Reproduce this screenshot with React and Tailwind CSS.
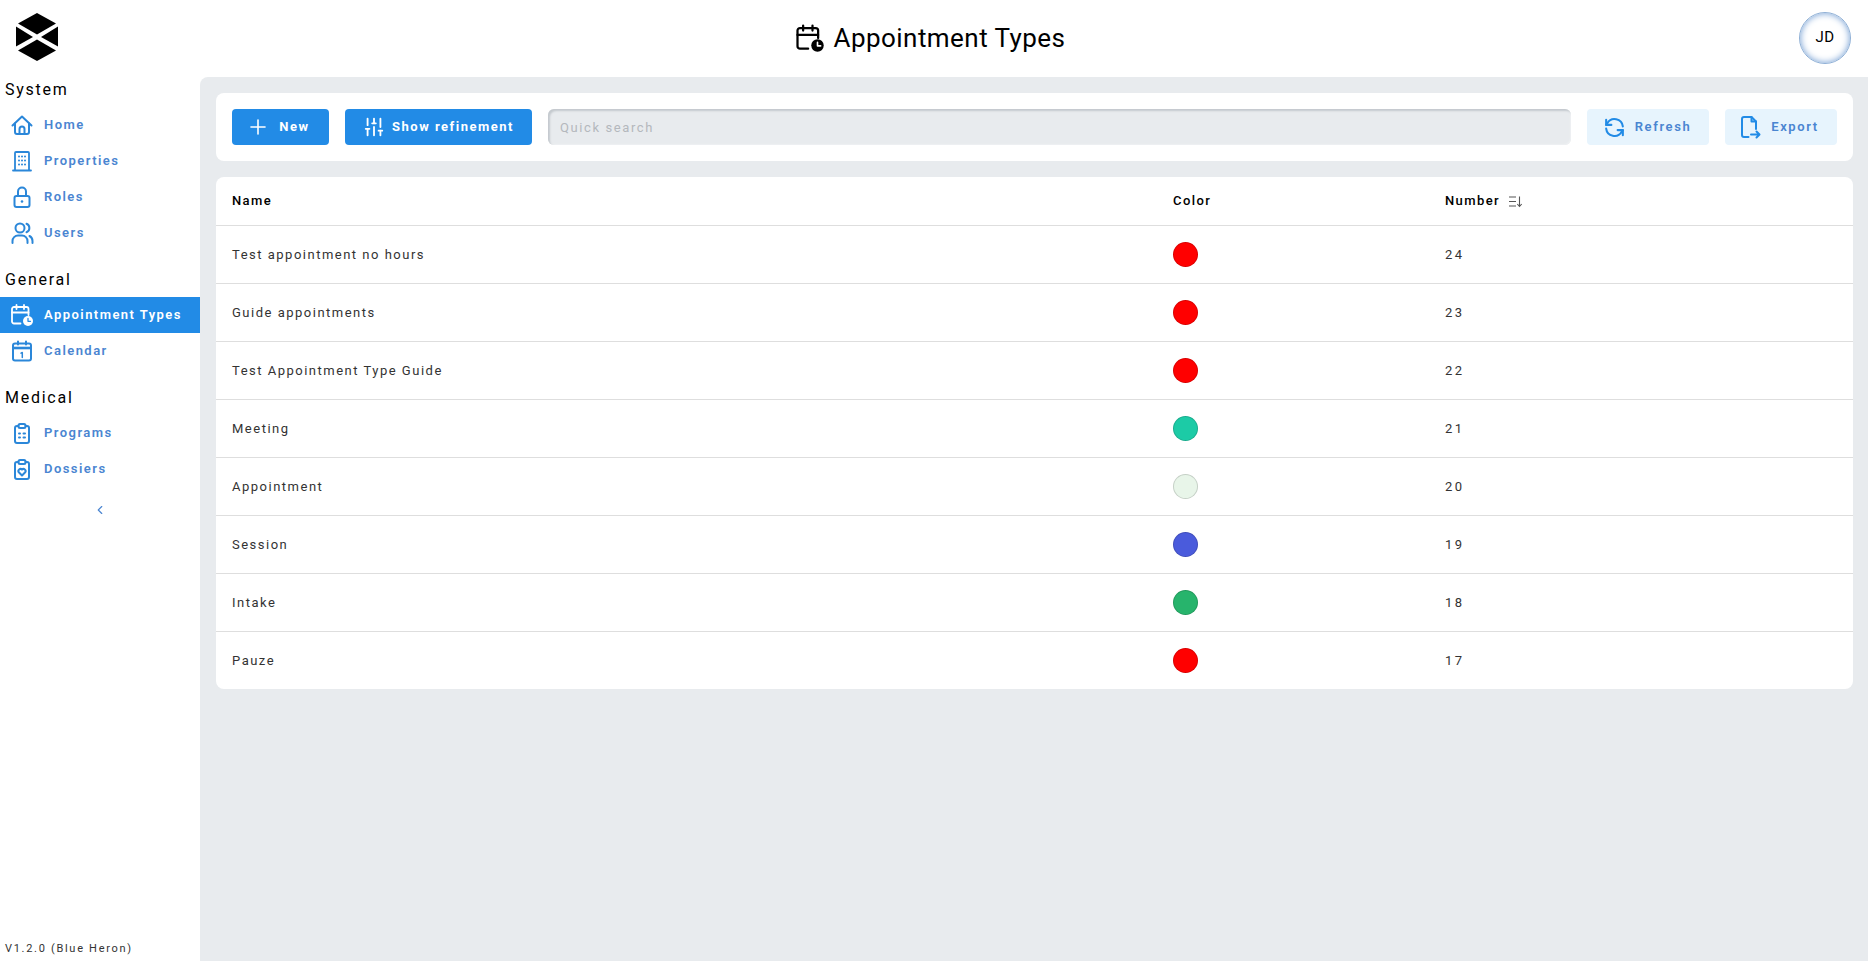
import { Plus, SlidersVertical, ChevronLeft } from 'lucide-react'

const rows = [
  { name: 'Test appointment no hours', color: '#ff0000', number: 24 },
  { name: 'Guide appointments', color: '#ff0000', number: 23 },
  { name: 'Test Appointment Type Guide', color: '#ff0000', number: 22 },
  { name: 'Meeting', color: '#1ccba6', number: 21 },
  { name: 'Appointment', color: '#e8f5e9', number: 20 },
  { name: 'Session', color: '#4a5bdc', number: 19 },
  { name: 'Intake', color: '#27b46c', number: 18 },
  { name: 'Pauze', color: '#ff0000', number: 17 },
]

function Logo() {
  return (
    <svg width="42" height="48" viewBox="0 0 42 48" fill="#000">
      <polygon points="21,0 40,10.5 21,21.5 2,10.5" />
      <polygon points="21,26.5 40,37.5 21,48 2,37.5" />
      <polygon points="0,13.5 17,24 0,33.5" />
      <polygon points="42,13.5 25,24 42,33.5" />
    </svg>
  )
}

// all line icons share the same 24 box and stroke
function Icon({ size = 24, width = 2, children }) {
  return (
    <svg width={size} height={size} viewBox="0 0 24 24" fill="none" stroke="currentColor" strokeWidth={width} strokeLinecap="round" strokeLinejoin="round">
      {children}
    </svg>
  )
}

const HomeIcon = () => (
  <Icon>
    <path d="M2.5 12.5L12 3.5l9.5 9" />
    <path d="M5 10.5V19a2 2 0 0 0 2 2h10a2 2 0 0 0 2-2v-8.500" />
    <path d="M9.500 21v-5a2.500 2.500 0 0 1 5 0v5" />
  </Icon>
)

const BuildingIcon = () => (
  <Icon width={1.8}>
    <path d="M5 21.500V4a1 1 0 0 1 1-1h12a1 1 0 0 1 1 1v17.500M3 21.500h18" />
    <path d="M9 7.500h.01M12 7.500h.01M15 7.500h.01M9 11.500h.01M12 11.500h.01M15 11.500h.01M9 15.500h.01M12 15.500h.01M15 15.500h.01" strokeWidth="2" />
  </Icon>
)

const LockIcon = () => (
  <Icon>
    <rect x="4.500" y="11" width="15" height="11" rx="2" />
    <path d="M8 11V6.500a4 4 0 0 1 8 0V11" />
    <circle cx="12" cy="16.500" r="1.300" fill="currentColor" stroke="none" />
  </Icon>
)

const UsersIcon = () => (
  <Icon>
    <circle cx="10" cy="7" r="4.500" />
    <path d="M2.500 22v-2a5.500 5.500 0 0 1 5.500-5.500h4a5.500 5.500 0 0 1 5.500 5.500v2" />
    <path d="M16.500 2.800a4.500 4.500 0 0 1 0 8.400M19.500 15a5.500 5.500 0 0 1 3 5v2" />
  </Icon>
)

function CalendarClockIcon({ size = 24, hand = '#fff' }) {
  return (
    <Icon size={size} width={1.8}>
      <path d="M10.500 20.500H4a2 2 0 0 1-2-2V6a2 2 0 0 1 2-2h12.500a2 2 0 0 1 2 2v6" />
      <path d="M2 9.500h16.500M6.500 2v4M14 2v4" />
      <circle cx="18" cy="18" r="5" fill="currentColor" stroke="none" />
      <path d="M18 15.500v2.800h2.500" stroke={hand} strokeWidth="1.300" />
    </Icon>
  )
}

const CalendarOneIcon = () => (
  <Icon>
    <rect x="3" y="4.500" width="18" height="17" rx="2" />
    <path d="M8 2.500v3M16 2.500v3" />
    <path d="M3.500 9h17" strokeWidth="2.600" strokeLinecap="butt" />
    <path d="M11 14.200l1.300-.7v5" strokeWidth="1.500" />
  </Icon>
)

const ClipboardListIcon = () => (
  <Icon>
    <path d="M8.500 5H7a2 2 0 0 0-2 2v13a2 2 0 0 0 2 2h10a2 2 0 0 0 2-2V7a2 2 0 0 0-2-2h-1.500" />
    <rect x="8.500" y="3" width="7" height="4" rx="1.500" />
    <path d="M9 12.500h1M9 16.500h1M13.500 12.500h1.500M13.500 16.500h1.500" />
  </Icon>
)

const ClipboardHeartIcon = () => (
  <Icon>
    <path d="M8.500 5H7a2 2 0 0 0-2 2v13a2 2 0 0 0 2 2h10a2 2 0 0 0 2-2V7a2 2 0 0 0-2-2h-1.500" />
    <rect x="8.500" y="3" width="7" height="4" rx="1.500" />
    <path d="M12 18.500l-3.200-3.200a2.100 2.100 0 0 1 3.200-2.700a2.100 2.100 0 0 1 3.200 2.700z" />
  </Icon>
)

const RefreshIcon = () => (
  <Icon size={25}>
    <path d="M20 11a8 8 0 0 0-14.900-3L4 9.500" />
    <path d="M4 4.500v5h5" />
    <path d="M4 13a8 8 0 0 0 14.900 3l1.100-1.500" />
    <path d="M20 19.500v-5h-5" />
  </Icon>
)

const FileExportIcon = () => (
  <Icon size={24}>
    <path d="M10.500 22H6a2 2 0 0 1-2-2V4a2 2 0 0 1 2-2h7.500L18 6.500V14" />
    <path d="M13.500 2v4.500H18" />
    <path d="M13 19.500h8M18.500 16.500l3 3-3 3" />
  </Icon>
)

function SortIcon() {
  return (
    <svg width="15" height="13" viewBox="0 0 15 13" fill="none" stroke="#555" strokeWidth="1.100">
      <path d="M1 2h7M1 6.500h7M1 11h7M11.500 1.500v10M9.300 9l2.200 2.500L13.700 9" />
    </svg>
  )
}

function NavItem({ icon, label, active }) {
  return (
    <div className={`flex items-center h-9 pl-[10px] gap-[10px] text-[13px] font-semibold tracking-[1.45px] ${active ? 'bg-[#228be6] text-white' : 'text-[#4a85d1]'}`}>
      <span className={`w-6 flex justify-center ${active ? 'text-white' : 'text-[#2b87d9]'}`}>{icon}</span>
      {label}
    </div>
  )
}

function SectionLabel({ children, className = '' }) {
  return <div className={`h-6 pl-[5px] leading-6 text-[16px] font-normal tracking-[1.75px] text-black ${className}`}>{children}</div>
}

export default function App() {
  return (
    <div className="h-screen flex flex-col bg-white overflow-hidden font-['Roboto',sans-serif]">
      {/* header */}
      <header className="h-[78px] flex items-center justify-between">
        <div className="w-[61px] pl-4 pb-[4px]"><Logo /></div>
        <div className="flex items-center gap-[9px] text-black pb-[3px]">
          <CalendarClockIcon size={30} />
          <h1 className="text-[26px] tracking-[0.45px] font-normal leading-none">Appointment Types</h1>
        </div>
        <div className="w-[69px] pb-[3px]">
          <div className="w-[52px] h-[52px] rounded-full bg-white border border-[#8fb0d6] shadow-[inset_0_0_7px_#6f9bd2] flex items-center justify-center text-[15px] font-normal tracking-[0.5px] text-black">JD</div>
        </div>
      </header>

      <div className="flex-1 flex min-h-0 -mt-px">
        {/* sidebar */}
        <aside className="w-[200px] shrink-0 flex flex-col">
          <SectionLabel className="mt-px">System</SectionLabel>
          <div className="mt-[5px]">
            <NavItem icon={<HomeIcon />} label="Home" />
            <NavItem icon={<BuildingIcon />} label="Properties" />
            <NavItem icon={<LockIcon />} label="Roles" />
            <NavItem icon={<UsersIcon />} label="Users" />
          </div>
          <SectionLabel className="mt-[17px]">General</SectionLabel>
          <div className="mt-[5px]">
            <NavItem icon={<CalendarClockIcon hand="#228be6" />} label="Appointment Types" active />
            <NavItem icon={<CalendarOneIcon />} label="Calendar" />
          </div>
          <SectionLabel className="mt-[17px]">Medical</SectionLabel>
          <div className="mt-[5px]">
            <NavItem icon={<ClipboardListIcon />} label="Programs" />
            <NavItem icon={<ClipboardHeartIcon />} label="Dossiers" />
          </div>
          <div className="mt-4 flex justify-center text-[#4a85d1]"><ChevronLeft size={14} /></div>
          <div className="mt-auto pl-[5px] pb-[4px] text-[11px] tracking-[1.7px] text-[#333]">V1.2.0 (Blue Heron)</div>
        </aside>

        {/* main */}
        <main className="flex-1 bg-[#e8ebee] rounded-tl-lg pl-4 pr-[15px] py-4 flex flex-col gap-4">
          <div className="h-[68px] bg-white rounded-lg px-4 flex items-center">
            <button className="w-[97px] h-9 rounded bg-[#228be6] text-white flex items-center justify-center gap-[9px] pr-[5px] text-[13px] font-bold tracking-[1.6px]">
              <Plus size={24} strokeWidth={1.6} />New
            </button>
            <button className="ml-4 w-[187px] h-9 rounded bg-[#228be6] text-white flex items-center justify-center gap-[7px] text-[13px] font-bold tracking-[1.5px]">
              <SlidersVertical size={22} strokeWidth={2} />Show refinement
            </button>
            <input
              placeholder="Quick search"
              className="ml-4 flex-1 h-9 rounded-md bg-[#e8ebee] px-3 text-[13px] tracking-[1.6px] placeholder:text-[#b4b8bd] shadow-[inset_2px_2px_2px_#c4c9ce,inset_-1px_-1px_1px_#eef0f2]"
            />
            <button className="ml-4 w-[122px] h-9 rounded bg-[#e7f4fd] text-[#4a85d1] flex items-center justify-center gap-2 pr-[3px] text-[13px] font-semibold tracking-[1.600px]">
              <span className="text-[#228be6]"><RefreshIcon /></span>Refresh
            </button>
            <button className="ml-4 w-[112px] h-9 rounded bg-[#e7f4fd] text-[#4a85d1] flex items-center justify-center gap-[9px] pr-[5px] text-[13px] font-semibold tracking-[1.600px]">
              <span className="text-[#228be6]"><FileExportIcon /></span>Export
            </button>
          </div>

          <div className="bg-white rounded-lg px-4">
            <div className="h-[49px] grid grid-cols-[941px_272px_1fr] items-center text-[13px] font-medium tracking-[1.4px] text-black -mx-4 px-4 border-b border-[#dedede]">
              <div>Name</div>
              <div>Color</div>
              <div className="flex items-center gap-2">Number <SortIcon /></div>
            </div>
            {rows.map((row, i) => (
              <div key={row.number} className={`grid grid-cols-[941px_272px_1fr] items-center text-[13px] tracking-[1.5px] text-[#333] -mx-4 px-4 ${i < rows.length - 1 ? 'h-[58px] border-b border-[#dedede]' : 'h-[57px]'}`}>
                <div>{row.name}</div>
                <div>
                  <div className="w-[25px] h-[25px] rounded-full border border-black/15" style={{ backgroundColor: row.color }} />
                </div>
                <div className="tracking-[2.5px]">{row.number}</div>
              </div>
            ))}
          </div>
        </main>
      </div>
    </div>
  )
}
